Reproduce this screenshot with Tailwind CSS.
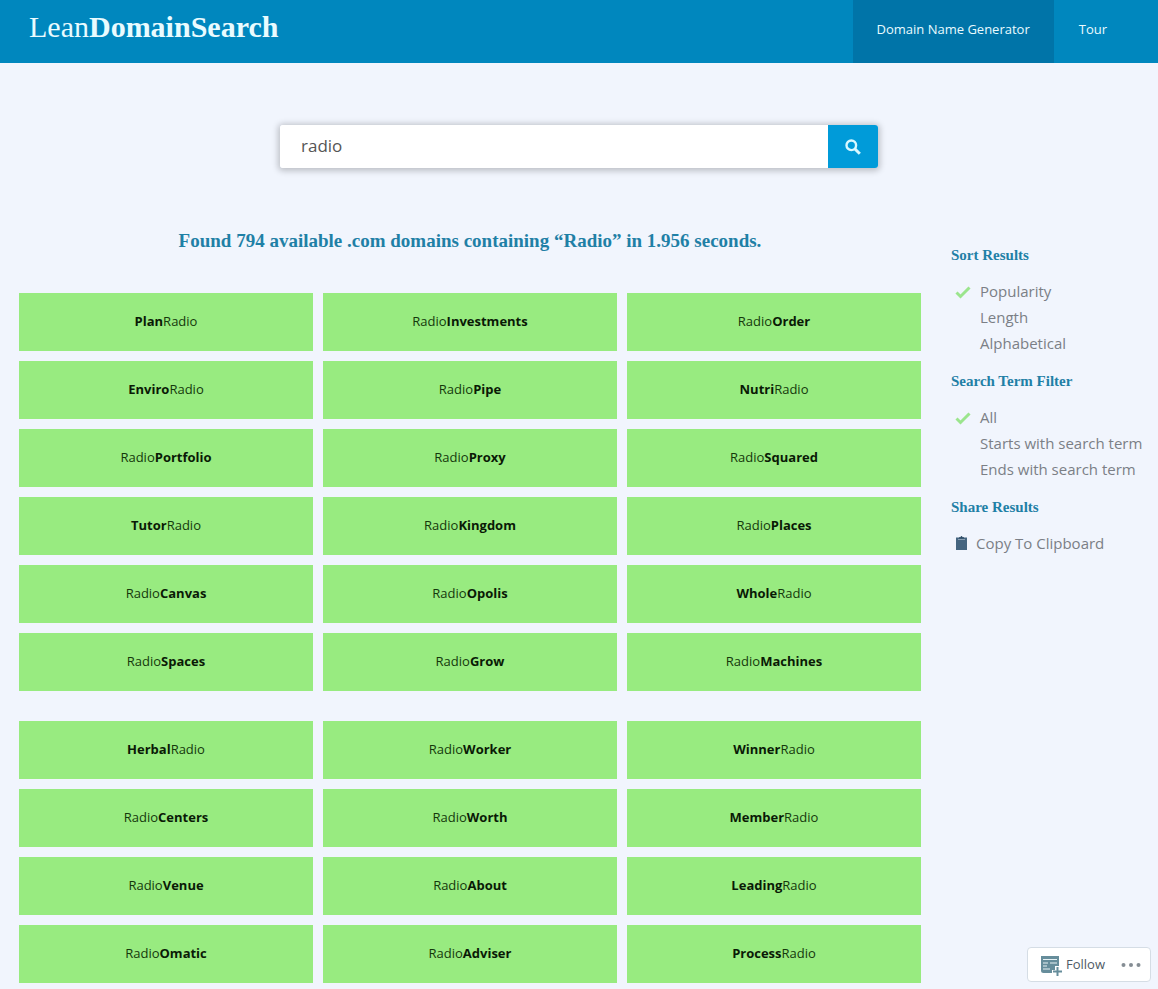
<!DOCTYPE html>
<html lang="en">
  <head>
    <meta charset="UTF-8" />
    <meta name="viewport" content="width=device-width, initial-scale=1.0" />
    <title>Lean Domain Search</title>
    <script src="https://cdn.jsdelivr.net/npm/@tailwindcss/browser@4"></script>
  </head>
  <body class="min-h-screen bg-[#f1f5fd] font-['Open_Sans','Noto_Sans',sans-serif] text-[#7b7f86]">

    <!-- Header -->
    <header class="flex h-[63px] items-stretch justify-between bg-[#0087be] pl-[29px] pr-[26px] text-[#e9fbff]">
      <a href="#" class="pt-[6px] font-['Liberation_Serif',serif] text-[30px] leading-[42px]">Lean<b>DomainSearch</b></a>
      <nav class="flex text-[13px] leading-[59px]">
        <a href="#" class="bg-[#0074a8] px-6">Domain Name Generator</a>
        <a href="#" class="px-[25px]">Tour</a>
      </nav>
    </header>

    <!-- Search -->
    <form class="mx-auto mt-[62px] flex h-[43px] max-w-[598px] rounded-[3px] shadow-[0_1px_6px_2px_rgba(0,0,0,0.22)]">
      <input type="text" value="radio" aria-label="Search term" class="min-w-0 flex-1 rounded-l-[3px] bg-white px-[21px] pb-[2px] text-[17px] text-[#555] outline-none" />
      <button type="button" aria-label="Search" class="flex w-[50px] items-center justify-center rounded-r-[3px] bg-[#009bd9]">
        <svg class="h-4 w-4" viewBox="0 0 16 16" fill="none" stroke="#d8f8ff">
          <circle cx="6.3" cy="6.3" r="4.8" stroke-width="2.4" />
          <path d="M10 10l4.8 4.8" stroke-width="3" />
        </svg>
      </button>
    </form>

    <div class="mt-[60px] flex gap-[30px] pl-[19px]">
      <!-- Results -->
      <main class="min-w-0 flex-1">
        <h2 class="text-center font-['Liberation_Serif',serif] text-[19px] leading-[26px] font-bold text-[#1f80a6]">Found 794 available .com domains containing “Radio” in 1.956 seconds.</h2>

        <div class="mt-[39px] grid grid-cols-3 gap-[10px] text-center text-[13px] leading-[56px] text-[#14380b] *:bg-[#98eb80] *:pb-[2px] **:[b]:text-[#0a1a06]">
          <a href="#"><b>Plan</b>Radio</a>
          <a href="#">Radio<b>Investments</b></a>
          <a href="#">Radio<b>Order</b></a>
          <a href="#"><b>Enviro</b>Radio</a>
          <a href="#">Radio<b>Pipe</b></a>
          <a href="#"><b>Nutri</b>Radio</a>
          <a href="#">Radio<b>Portfolio</b></a>
          <a href="#">Radio<b>Proxy</b></a>
          <a href="#">Radio<b>Squared</b></a>
          <a href="#"><b>Tutor</b>Radio</a>
          <a href="#">Radio<b>Kingdom</b></a>
          <a href="#">Radio<b>Places</b></a>
          <a href="#">Radio<b>Canvas</b></a>
          <a href="#">Radio<b>Opolis</b></a>
          <a href="#"><b>Whole</b>Radio</a>
          <a href="#">Radio<b>Spaces</b></a>
          <a href="#">Radio<b>Grow</b></a>
          <a href="#">Radio<b>Machines</b></a>
        </div>

        <div class="mt-[30px] grid grid-cols-3 gap-[10px] text-center text-[13px] leading-[56px] text-[#14380b] *:bg-[#98eb80] *:pb-[2px] **:[b]:text-[#0a1a06]">
          <a href="#"><b>Herbal</b>Radio</a>
          <a href="#">Radio<b>Worker</b></a>
          <a href="#"><b>Winner</b>Radio</a>
          <a href="#">Radio<b>Centers</b></a>
          <a href="#">Radio<b>Worth</b></a>
          <a href="#"><b>Member</b>Radio</a>
          <a href="#">Radio<b>Venue</b></a>
          <a href="#">Radio<b>About</b></a>
          <a href="#"><b>Leading</b>Radio</a>
          <a href="#">Radio<b>Omatic</b></a>
          <a href="#">Radio<b>Adviser</b></a>
          <a href="#"><b>Process</b>Radio</a>
        </div>
      </main>

      <!-- Sidebar -->
      <aside class="w-[207px] shrink-0 pt-[14px] text-[15px] leading-[26px]">
        <fieldset>
          <legend class="font-['Liberation_Serif',serif] text-[15px] leading-[26px] font-bold text-[#1f80a6]">Sort Results</legend>
          <div class="mt-[10px]">
            <label class="relative block pl-[29px]"><input type="radio" name="sort" checked class="peer absolute left-1 top-[6px] h-4 w-4 appearance-none" /><svg class="absolute left-1 top-[6px] hidden h-4 w-4 peer-checked:block" viewBox="0 0 16 16" fill="none" stroke="#9be58d" stroke-width="3"><path d="M1.5 8.5l4 4 9-9" /></svg>Popularity</label>
            <label class="relative block pl-[29px]"><input type="radio" name="sort" class="absolute left-1 top-[6px] h-4 w-4 appearance-none" />Length</label>
            <label class="relative block pl-[29px]"><input type="radio" name="sort" class="absolute left-1 top-[6px] h-4 w-4 appearance-none" />Alphabetical</label>
          </div>
        </fieldset>

        <fieldset class="mt-3">
          <legend class="font-['Liberation_Serif',serif] text-[15px] leading-[26px] font-bold text-[#1f80a6]">Search Term Filter</legend>
          <div class="mt-[10px]">
            <label class="relative block pl-[29px]"><input type="radio" name="filter" checked class="peer absolute left-1 top-[6px] h-4 w-4 appearance-none" /><svg class="absolute left-1 top-[6px] hidden h-4 w-4 peer-checked:block" viewBox="0 0 16 16" fill="none" stroke="#9be58d" stroke-width="3"><path d="M1.5 8.5l4 4 9-9" /></svg>All</label>
            <label class="relative block pl-[29px]"><input type="radio" name="filter" class="absolute left-1 top-[6px] h-4 w-4 appearance-none" />Starts with search term</label>
            <label class="relative block pl-[29px]"><input type="radio" name="filter" class="absolute left-1 top-[6px] h-4 w-4 appearance-none" />Ends with search term</label>
          </div>
        </fieldset>

        <h3 class="mt-3 font-['Liberation_Serif',serif] font-bold text-[#1f80a6]">Share Results</h3>
        <button type="button" class="mt-[10px] flex items-center gap-2 pl-1">
          <svg class="h-[14px] w-[13px]" viewBox="0 0 13 14">
            <path d="M1 1.500h11V14H1z" fill="#456580" />
            <path d="M4 2.500V1.200h1.500C5.700.4 6 0 6.500 0s.8.4 1 1.200H9v1.300z" fill="#2f4c66" />
            <path d="M3 3.500h7" stroke="#8ba0b3" stroke-width="1" />
          </svg>
          Copy To Clipboard
        </button>
      </aside>
    </div>

    <!-- Follow bar -->
    <div class="fixed right-[7px] bottom-[7px] flex h-[35px] items-center rounded border border-[#d5dde5] bg-white pl-3 pr-[9px] text-[13px] text-[#4f5b66]">
      <button type="button" class="flex items-center gap-1">
        <svg class="h-[22px] w-[22px]" viewBox="0 0 22 22">
          <path d="M1 2h18v10h-4v4h-3v3H3.500A2.500 2.500 0 0 1 1 16.500z" fill="#668d9b" />
          <path d="M3 5.500h14M3 9h5M10 9h7M3 12h4M3 15h7" stroke="#e6f1f4" stroke-width="1.200" />
          <path d="M17.500 13v9M13 17.500h9" stroke="#668d9b" stroke-width="2" />
        </svg>
        Follow
      </button>
      <button type="button" aria-label="More options" class="ml-4">
        <svg class="h-1 w-5" viewBox="0 0 20 4" fill="#858d94">
          <circle cx="2.500" cy="2" r="2" />
          <circle cx="10" cy="2" r="2" />
          <circle cx="17.500" cy="2" r="2" />
        </svg>
      </button>
    </div>
  </body>
</html>
